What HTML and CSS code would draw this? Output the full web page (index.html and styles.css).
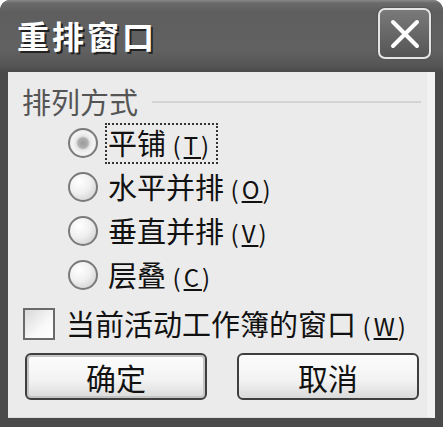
FILE: index.html
```html
<!DOCTYPE html>
<html lang="zh-CN">
<head>
    <meta charset="UTF-8">
    <title>重排窗口</title>
    <link rel="stylesheet" href="styles.css">
</head>
<body>
    <div class="window">
        <div class="titlebar">
            <span class="title">重排窗口</span>
            <button class="close-btn" aria-label="关闭">
                <svg width="30" height="30" viewBox="0 0 30 30">
                    <path d="M3 3 L27 27 M27 3 L3 27" stroke="#fff" stroke-width="4" stroke-linecap="round"/>
                </svg>
            </button>
        </div>
        <div class="content">
            <div class="group-head">
                <span class="group-label">排列方式</span>
                <span class="group-line"></span>
            </div>
            <div class="options">
                <div class="option">
                    <span class="radio checked"></span>
                    <span class="focus">平铺 <span class="key">(<u>T</u>)</span></span>
                </div>
                <div class="option">
                    <span class="radio"></span>
                    <span class="label">水平并排 <span class="key">(<u>O</u>)</span></span>
                </div>
                <div class="option">
                    <span class="radio"></span>
                    <span class="label">垂直并排 <span class="key">(<u>V</u>)</span></span>
                </div>
                <div class="option">
                    <span class="radio"></span>
                    <span class="label">层叠 <span class="key">(<u>C</u>)</span></span>
                </div>
            </div>
            <div class="check-row">
                <span class="checkbox"></span>
                <span class="label">当前活动工作簿的窗口 <span class="key">(<u>W</u>)</span></span>
            </div>
            <div class="buttons">
                <button class="btn default">确定</button>
                <button class="btn">取消</button>
            </div>
        </div>
    </div>
</body>
</html>
```

FILE: styles.css
```css
body {
    margin: 0;
    background: #fff;
    font-family: "Noto Sans CJK SC", "Noto Sans", sans-serif;
    color: #111;
}
.window {
    width: 443px;
    height: 427px;
    box-sizing: border-box;
    background: #4a4a4a;
    border-radius: 10px 10px 0 0;
    display: flex;
    flex-direction: column;
}
.titlebar {
    height: 72px;
    box-sizing: border-box;
    border-radius: 10px 10px 0 0;
    background: linear-gradient(#8a8a8a 0, #6a6a6a 3px, #5e5e5e 12px, #616161 50px, #555 66px, #4a4a4a 72px);
    display: flex;
    align-items: center;
    justify-content: space-between;
    padding: 0 12px 0 17px;
}
.title {
    color: #fff;
    font-size: 32px;
    font-weight: bold;
    letter-spacing: 3px;
    line-height: 1;
    text-shadow: 2px 2px 0 #222;
    margin-top: -2px;
}
.close-btn {
    width: 53px;
    height: 51px;
    margin-top: -5px;
    padding: 0;
    border: 2px solid #e4e4e4;
    border-radius: 7px;
    background: linear-gradient(#7a7a7a, #555);
    display: flex;
    align-items: center;
    justify-content: center;
    box-shadow: 0 0 0 1px #555;
}
.content {
    flex: 1;
    margin: 0 8px 9px 8px;
    background: #ebebeb;
    border-right: 8px solid #f2f2f2;
    border-bottom: 1px solid #dcdcdc;
    padding: 14px 0 0 14px;
    display: flex;
    flex-direction: column;
}
.group-head {
    display: flex;
    align-items: center;
    height: 30px;
    padding-right: 6px;
}
.group-label {
    font-size: 29px;
    line-height: 30px;
    color: #555;
}
.group-line {
    flex: 1;
    height: 0;
    border-top: 2px solid #d4d4d4;
    margin-left: 14px;
    margin-top: 2px;
}
.options {
    margin-top: 5px;
    padding-left: 46px;
}
.option {
    height: 44px;
    display: flex;
    align-items: center;
}
.radio {
    width: 26px;
    height: 26px;
    border: 2px solid #7a7a7a;
    border-radius: 50%;
    background: radial-gradient(circle at 35% 30%, #fff 0, #f0f0f0 45%, #c8c8c8 100%);
    margin-right: 10px;
    flex-shrink: 0;
}
.radio.checked {
    background: radial-gradient(circle, #9a9a9a 0, #b0b0b0 5px, #e6e6e6 7px, #f4f4f4 60%, #cfcfcf 100%);
}
.label, .focus {
    font-size: 29px;
    line-height: 32px;
}
.focus {
    border: 2px dotted #333;
    padding: 1px 4px 1px 1px;
    margin-left: -3px;
}
.key {
    font-size: 24px;
    letter-spacing: 3px;
}
.check-row {
    margin-top: 5px;
    height: 44px;
    display: flex;
    align-items: center;
}
.checkbox {
    width: 28px;
    height: 28px;
    border: 2px solid #6a6a6a;
    background: linear-gradient(135deg, #d8d8d8, #f8f8f8 60%, #fff);
    margin-right: 11px;
    margin-left: 1px;
}
.buttons {
    margin-top: 7px;
    display: flex;
    gap: 30px;
    padding-left: 3px;
}
.btn {
    width: 182px;
    height: 47px;
    font-family: "Noto Sans CJK SC", "Noto Sans", sans-serif;
    font-size: 30px;
    color: #111;
    border: 2px solid #3f3f3f;
    border-radius: 6px;
    background: linear-gradient(#fdfdfd, #f2f2f2 60%, #dadada);
    padding: 0;
    line-height: 1;
}
.btn.default {
    box-shadow: inset 0 0 0 2px #c4c4c4;
}
```
